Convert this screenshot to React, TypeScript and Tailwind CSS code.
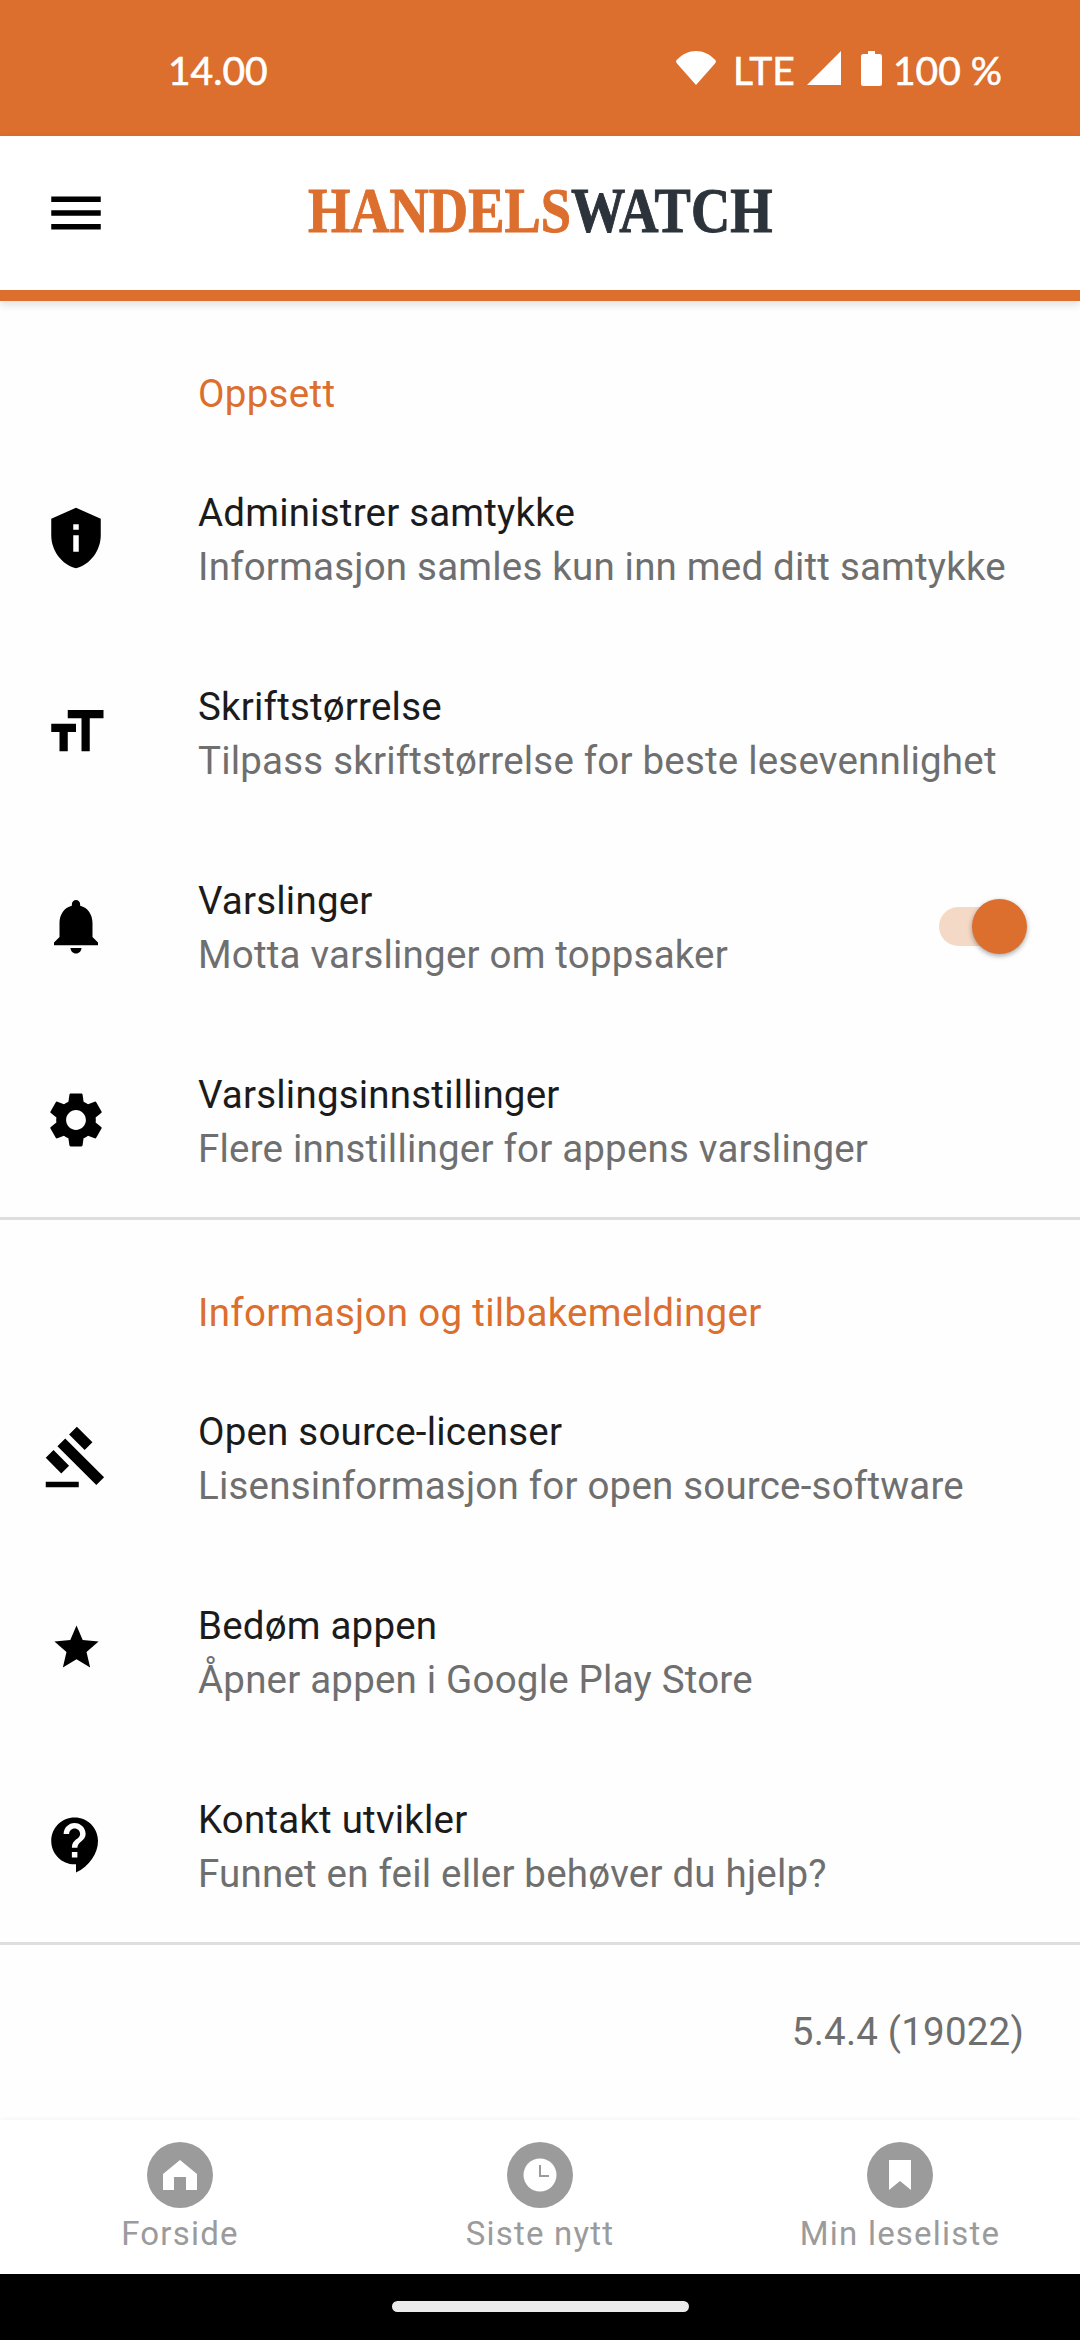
import type { ReactNode } from "react";

const paths = {
  menu: "M3 18h18v-2H3v2zm0-5h18v-2H3v2zm0-7v2h18V6H3z",
  shield:
    "M12 1L3 5v6c0 5.55 3.84 10.74 9 12 5.16-1.26 9-6.45 9-12V5l-9-4zm1 16h-2v-6h2v6zm0-8h-2V7h2v2z",
  textSize: "M9 4v3h5v12h3V7h5V4H9zm-6 8h3v7h3v-7h3V9H3v3z",
  bell: "M12 22c1.1 0 2-.9 2-2h-4c0 1.1.89 2 2 2zm6-6v-5c0-3.07-1.64-5.64-4.5-6.32V4c0-.83-.67-1.5-1.5-1.5s-1.5.67-1.5 1.5v.68C7.63 5.36 6 7.92 6 11v5l-2 2v1h16v-1l-2-2z",
  gear: "M19.14 12.94c.04-.3.06-.61.06-.94 0-.32-.02-.64-.07-.94l2.03-1.58c.18-.14.23-.41.12-.61l-1.92-3.32c-.12-.22-.37-.29-.59-.22l-2.39.96c-.5-.38-1.03-.7-1.62-.94l-.36-2.54c-.04-.24-.24-.41-.48-.41h-3.84c-.24 0-.43.17-.47.41l-.36 2.54c-.59.24-1.13.57-1.62.94l-2.39-.96c-.22-.08-.47 0-.59.22L2.74 8.87c-.12.21-.08.47.12.61l2.03 1.58c-.05.3-.09.63-.09.94s.02.64.07.94l-2.03 1.58c-.18.14-.23.41-.12.61l1.92 3.32c.12.22.37.29.59.22l2.39-.96c.5.38 1.03.7 1.62.94l.36 2.54c.05.24.24.41.48.41h3.84c.24 0 .44-.17.47-.41l.36-2.54c.59-.24 1.13-.56 1.62-.94l2.39.96c.22.08.47 0 .59-.22l1.92-3.32c.12-.22.07-.47-.12-.61l-2.01-1.58zM12 15.6c-1.98 0-3.6-1.62-3.6-3.6s1.62-3.6 3.6-3.6 3.6 1.62 3.6 3.6-1.62 3.6-3.6 3.6z",
  gavel:
    "M1 21h12v2H1v-2zM5.245 8.07l2.83-2.827 14.14 14.142-2.828 2.828L5.245 8.07zM12.317 1l5.657 5.656-2.83 2.83-5.654-5.66L12.317 1zM3.825 9.485l5.657 5.657-2.828 2.828-5.657-5.657 2.828-2.828z",
  star: "M12 17.27L18.18 21l-1.64-6.97L22 9.24l-7.19-.61L12 2 9.19 8.63 2 9.24l5.46 4.79L5.82 21z",
  help: "M11.5 2C6.81 2 3 5.81 3 10.5S6.81 19 11.5 19h.5v3c4.86-2.34 8-7 8-11.5C20 5.81 16.19 2 11.5 2zm1 14.5h-2v-2h2v2zm0-3.5h-2c0-3.25 3-3 3-5 0-1.1-.9-2-2-2s-2 .9-2 2h-2c0-2.21 1.79-4 4-4s4 1.79 4 4c0 2.5-3 2.75-3 5z",
};

function Icon({ d, className }: { d: string; className: string }) {
  return (
    <svg viewBox="0 0 24 24" fill="currentColor" className={className}>
      <path d={d} />
    </svg>
  );
}

function StatusBar() {
  return (
    <div className="h-[136px] bg-[#dc6e2e] flex items-center text-white font-['Lato',sans-serif] text-[39px] [-webkit-text-stroke:0.6px_white] pl-[168px] pr-[78px] pt-[4px]">
      <span>14.00</span>
      <div className="ml-auto flex items-center">
        <svg viewBox="0 0 40 34" className="w-[40px] h-[34px] fill-white -translate-y-[2px]">
          <path d="M20 34L1 12.5C-.5 10.5 0 9.5 1.5 8.3 6.5 3 13 0 20 0s13.5 3 18.5 8.3c1.5 1.2 2 2.2.5 4.2z" />
        </svg>
        <span className="ml-[17px] leading-none">LTE</span>
        <svg viewBox="0 0 34 34" className="ml-[12px] w-[34px] h-[34px] fill-white -translate-y-[2px]">
          <path d="M34 0v34H0z" />
        </svg>
        <svg viewBox="0 0 21 35" className="ml-[20px] w-[21px] h-[35px] fill-white -translate-y-[2px]">
          <path d="M7 0h7v3h5c1 0 2 1 2 2v28c0 1-1 2-2 2H2c-1 0-2-1-2-2V5c0-1 1-2 2-2h5z" />
        </svg>
        <span className="ml-[11px] leading-none">100 %</span>
      </div>
    </div>
  );
}

function TopBar() {
  return (
    <div className="relative z-10 shadow-[0_4px_8px_rgba(0,0,0,0.12)]">
      <div className="h-[154px] bg-white flex items-center relative">
        <div className="w-[152px] flex justify-center text-black">
          <Icon d={paths.menu} className="w-[66px] h-[66px]" />
        </div>
        <div className="absolute left-0 right-0 top-[40px] flex justify-center">
          <span className="font-['Liberation_Serif',serif] font-bold text-[64px] leading-[70px] scale-x-[0.85] whitespace-nowrap">
            <span className="text-[#dc6e2e] [-webkit-text-stroke:1px_#dc6e2e]">HANDELS</span>
            <span className="text-[#2d333b] [-webkit-text-stroke:1px_#2d333b]">WATCH</span>
          </span>
        </div>
      </div>
      <div className="h-[11px] bg-[#dc6e2e]" />
    </div>
  );
}

function SectionLabel({ children }: { children: ReactNode }) {
  return (
    <div className="h-[140px] pl-[198px] pt-[68px] text-[#dc6e2e] text-[38.5px] leading-[50px] tracking-[0.3px]">
      {children}
    </div>
  );
}

function Row({
  icon,
  title,
  sub,
  iconClass = "w-[66px] h-[66px]",
  right,
}: {
  icon: string;
  title: string;
  sub: string;
  iconClass?: string;
  right?: ReactNode;
}) {
  return (
    <div className="h-[194px] flex items-center">
      <div className="w-[152px] shrink-0 flex justify-center text-black">
        <Icon d={icon} className={iconClass} />
      </div>
      <div className="ml-[46px] pt-[3px] flex flex-col">
        <div className="text-[38.5px] leading-[54px] text-[#1b1b1b] tracking-[0.2px]">{title}</div>
        <div className="text-[38.5px] leading-[54px] text-[#6f6f6f] tracking-[0.2px]">{sub}</div>
      </div>
      {right}
    </div>
  );
}

function Toggle() {
  return (
    <div className="ml-auto mr-[63px] relative w-[78px] h-[39px] rounded-full bg-[#f4d9c7]">
      <div className="absolute right-[-10px] top-[-8px] w-[55px] h-[55px] rounded-full bg-[#dc6e2e] shadow-[0_2px_5px_rgba(0,0,0,0.35)]" />
    </div>
  );
}

function NavItem({ label, children }: { label: string; children: ReactNode }) {
  return (
    <div className="flex-1 flex flex-col items-center">
      <div className="w-[66px] h-[66px] rounded-full bg-[#9b9b9b] flex items-center justify-center">
        {children}
      </div>
      <div className="mt-[4px] text-[33px] leading-[44px] tracking-[1.2px] text-[#9b9b9b]">{label}</div>
    </div>
  );
}

function BottomNav() {
  return (
    <div className="h-[154px] bg-white shadow-[0_-2px_4px_rgba(0,0,0,0.03)] pt-[22px] flex items-start">
      <NavItem label="Forside">
        <svg viewBox="0 0 34 30" className="w-[34px] h-[30px] fill-white">
          <path d="M17 0L34 14v16H23V17H11v13H0V14z" />
        </svg>
      </NavItem>
      <NavItem label="Siste nytt">
        <svg viewBox="0 0 34 34" className="w-[34px] h-[34px]">
          <circle cx="17" cy="17" r="16.5" fill="#fff" />
          <path d="M16 7h2v10h8v2H16z" fill="#9b9b9b" />
        </svg>
      </NavItem>
      <NavItem label="Min leseliste">
        <svg viewBox="0 0 22 30" className="w-[22px] h-[30px] fill-white">
          <path d="M0 0h22v30L11 21 0 30z" />
        </svg>
      </NavItem>
    </div>
  );
}

export default function App() {
  return (
    <div className="w-[1080px] h-[2340px] bg-white overflow-hidden flex flex-col font-['Roboto',sans-serif]">
      <StatusBar />
      <TopBar />
      <div className="flex-1 bg-[#fefefe]">
        <SectionLabel>Oppsett</SectionLabel>
        <Row icon={paths.shield} title="Administrer samtykke" sub="Informasjon samles kun inn med ditt samtykke" />
        <Row icon={paths.textSize} title="Skriftstørrelse" sub="Tilpass skriftstørrelse for beste lesevennlighet" />
        <Row icon={paths.bell} title="Varslinger" sub="Motta varslinger om toppsaker" right={<Toggle />} />
        <Row icon={paths.gear} title="Varslingsinnstillinger" sub="Flere innstillinger for appens varslinger" />
        <div className="h-[3px] bg-[#dedede]" />
        <SectionLabel>Informasjon og tilbakemeldinger</SectionLabel>
        <Row icon={paths.gavel} title="Open source-licenser" sub="Lisensinformasjon for open source-software" />
        <Row icon={paths.star} iconClass="w-[53px] h-[53px] -translate-y-[4px]" title="Bedøm appen" sub="Åpner appen i Google Play Store" />
        <Row icon={paths.help} title="Kontakt utvikler" sub="Funnet en feil eller behøver du hjelp?" />
        <div className="h-[3px] bg-[#dedede]" />
        <div className="pt-[60px] pr-[56px] text-right text-[38.5px] leading-[54px] text-[#6f6f6f] tracking-[0.2px]">5.4.4 (19022)</div>
      </div>
      <BottomNav />
      <div className="h-[66px] bg-black flex justify-center pt-[27px]">
        <div className="w-[297px] h-[11px] rounded-full bg-[#ebebeb]" />
      </div>
    </div>
  );
}
